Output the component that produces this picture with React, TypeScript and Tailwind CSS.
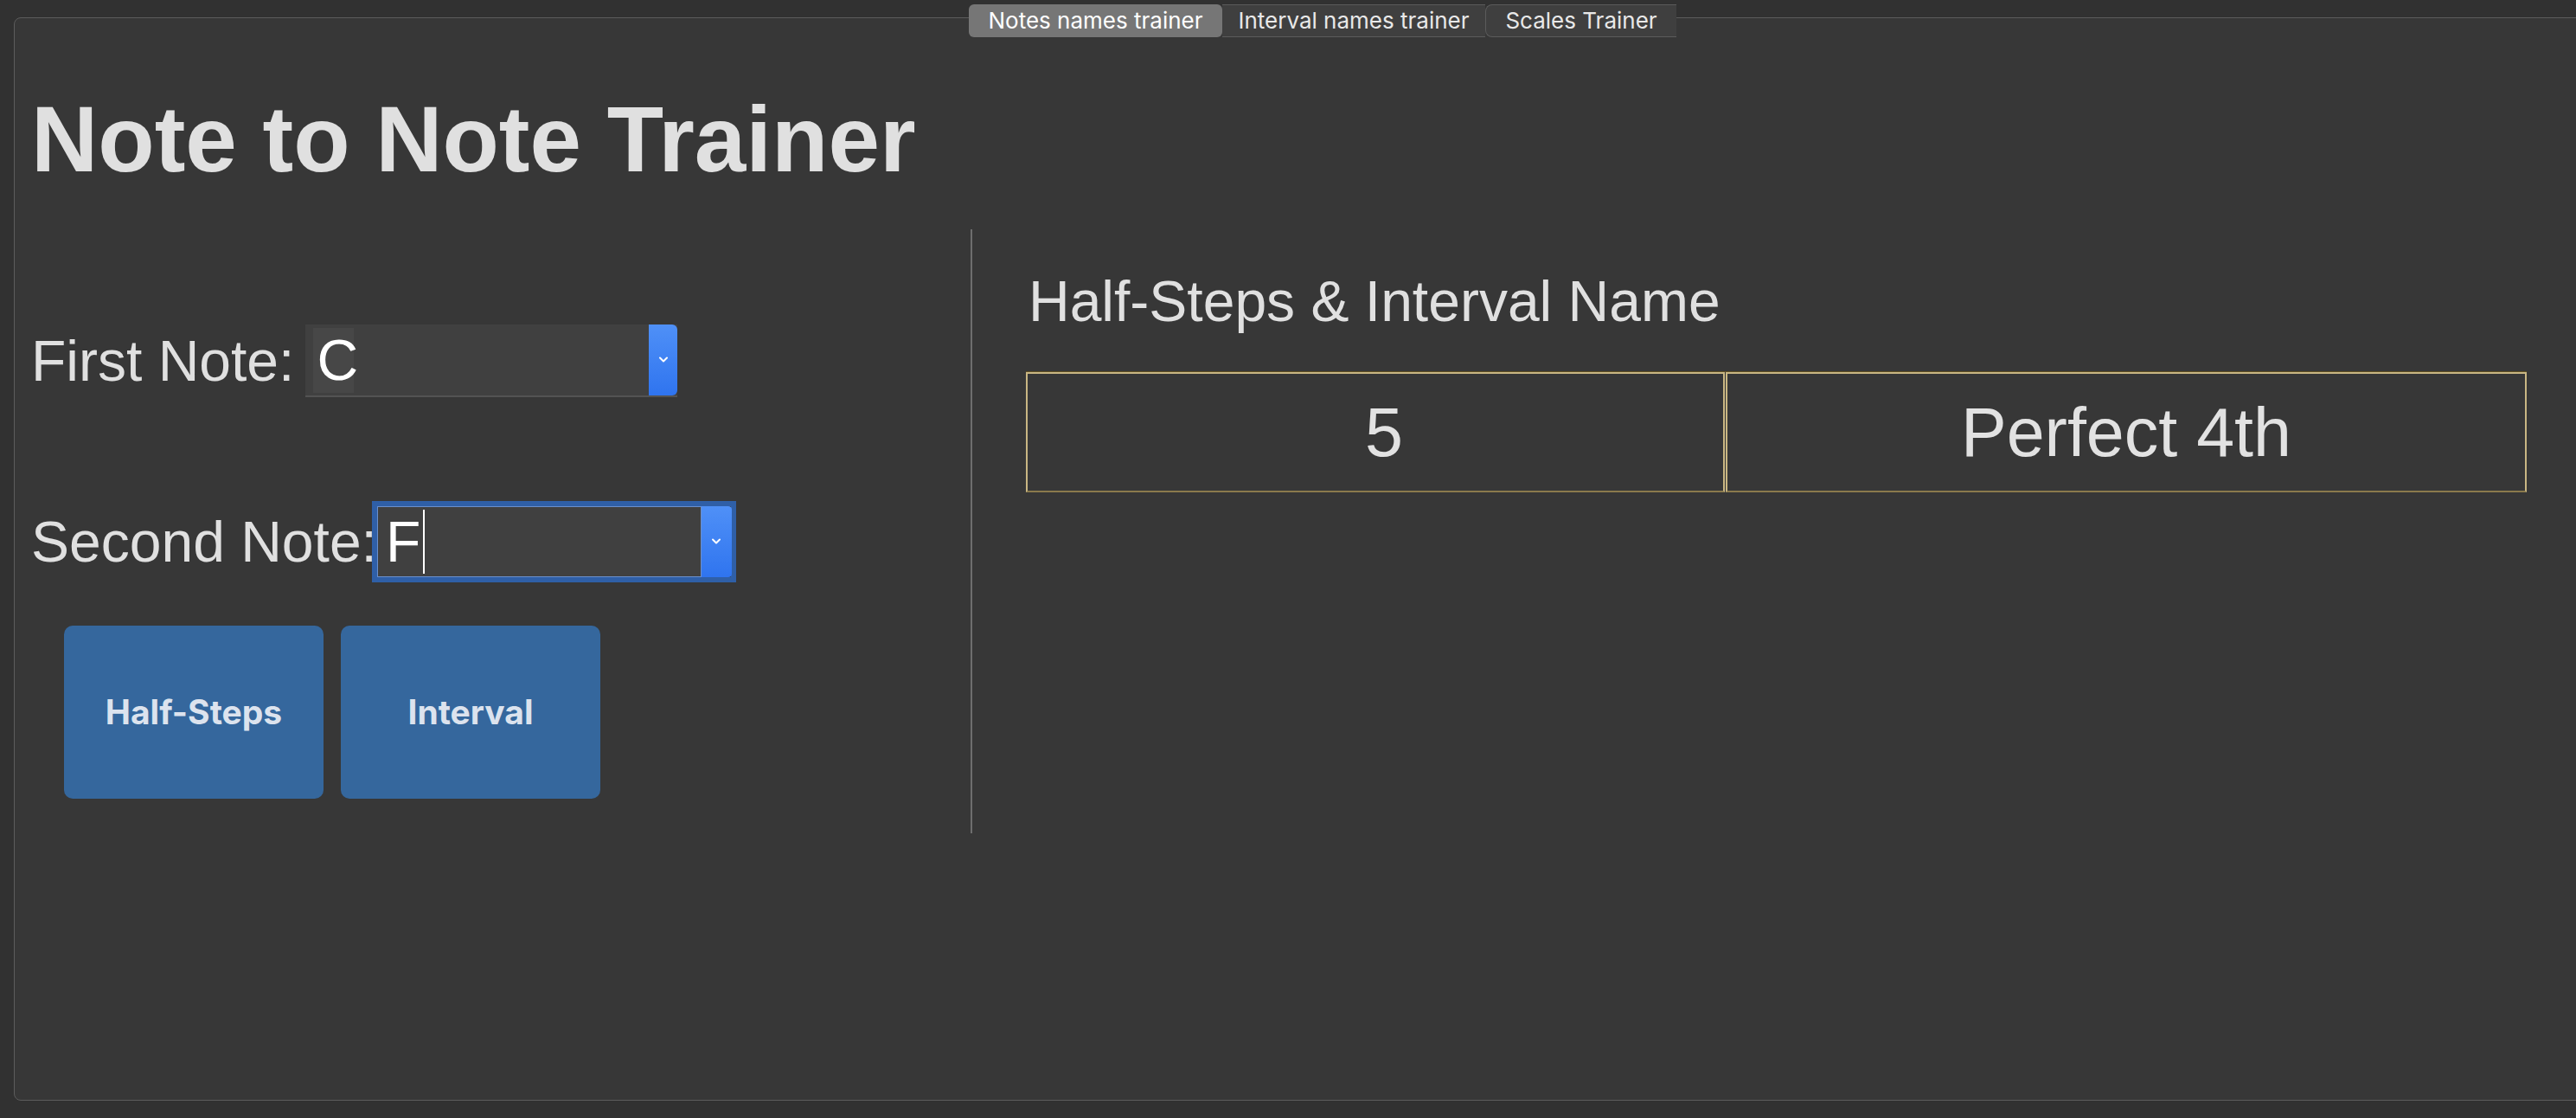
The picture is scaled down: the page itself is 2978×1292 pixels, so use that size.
import { ReactNode } from "react";

const sans = { fontFamily: '"Liberation Sans", Arial, sans-serif' };
const ui = { fontFamily: 'Inter, "Noto Sans", sans-serif' };

function Chevron() {
  return (
    <svg width="12" height="8" viewBox="0 0 12 8" fill="none">
      <polyline points="2,1.5 6,5.5 10,1.5" stroke="white" strokeWidth="2" strokeLinecap="round" strokeLinejoin="round" />
    </svg>
  );
}

function NoteSelect({ value, focused }: { value: string; focused?: boolean }) {
  if (focused) {
    return (
      <div className="flex h-[94px] w-[421px] border-[6px] border-[#2f5fa7]">
        <div className="flex flex-1 items-center border border-[#6b8fcb] bg-[#404040] pl-[9px]">
          <span className="text-[66px] leading-none text-white">{value}</span>
          <span className="ml-[3px] h-[74px] w-[2px] bg-white" />
        </div>
        <div className="-mr-[1px] flex w-[35px] items-center justify-center rounded-r-[4px] bg-gradient-to-b from-[#4f90f7] to-[#2f74ef]">
          <Chevron />
        </div>
      </div>
    );
  }
  return (
    <div className="flex h-[84px] w-[430px] border-b-2 border-[#535353] bg-[#404040]">
      <div className="flex flex-1 items-center pl-[9px]">
        <span className="flex h-[75px] w-[47px] items-center bg-[#474747] pl-[4px] text-[66px] leading-none text-white">
          {value}
        </span>
      </div>
      <div className="flex w-[33px] items-center justify-center rounded-r-[6px] bg-gradient-to-b from-[#4f90f7] to-[#2f74ef]">
        <Chevron />
      </div>
    </div>
  );
}

function ActionButton({ children }: { children: ReactNode }) {
  return (
    <button
      type="button"
      style={ui}
      className="flex h-[200px] w-[300px] items-center justify-center rounded-[10px] bg-[#35679d] text-[39px] font-bold text-[#dce3ee]"
    >
      {children}
    </button>
  );
}

function Cell({ children, className }: { children: ReactNode; className: string }) {
  return (
    <div
      className={`${className} flex h-[139px] items-center justify-center border-2 border-[#c9b683] border-b-[#8a7a4c] text-[79px] leading-none text-[#e2e2e2]`}
    >
      {children}
    </div>
  );
}

export default function App() {
  return (
    <div className="relative h-[1292px] w-[2978px] overflow-hidden bg-[#313131] text-[#e0e0e0]" style={sans}>
      <div className="ml-[16px] mt-[20px] h-[1252px] w-[2990px] rounded-l-[8px] border border-[#5c5c5c] bg-[#373737] pl-[19px]">
        <h1 className="mt-[87px] text-[107px] font-bold leading-none text-[#e0e0e0]">Note to Note Trainer</h1>

        <div className="mt-[50px] flex">
          <div className="w-[1086px]">
            <div className="mt-[110px] flex items-center">
              <span className="text-[66px] leading-none">First Note:</span>
              <div className="ml-[13px]">
                <NoteSelect value="C" />
              </div>
            </div>
            <div className="mt-[120px] flex items-center">
              <span className="text-[66px] leading-none">Second Note:</span>
              <div className="-ml-[6px]">
                <NoteSelect value="F" focused />
              </div>
            </div>
            <div className="ml-[38px] mt-[50px] flex gap-[20px]">
              <ActionButton>Half-Steps</ActionButton>
              <ActionButton>Interval</ActionButton>
            </div>
          </div>

          <div className="h-[698px] w-[2px] bg-[#6e6e6e]" />

          <div className="pl-[62px]">
            <h2 className="ml-[3px] mt-[50px] text-[66px] font-normal leading-none">Half-Steps &amp; Interval Name</h2>
            <div className="mt-[48px] flex gap-[1px] border-t border-[#5e4e22]">
              <Cell className="w-[808px] pl-[20px]">5</Cell>
              <Cell className="w-[926px]">Perfect 4th</Cell>
            </div>
          </div>
        </div>
      </div>

      <div className="absolute left-[1120px] top-[5px] flex h-[38px] text-[26px] leading-none" style={ui}>
        <div className="flex w-[293px] items-center justify-center rounded-[6px] bg-[#767676] text-white">
          Notes names trainer
        </div>
        <div className="flex w-[304px] items-center justify-center border-y border-[#5b5b5b] bg-[#3f3f3f] text-[#e8e8e8]">
          Interval names trainer
        </div>
        <div className="flex w-[221px] items-center justify-center rounded-l-[8px] border-y border-l border-[#5b5b5b] bg-[#3f3f3f] text-[#e8e8e8]">
          Scales Trainer
        </div>
      </div>
    </div>
  );
}
